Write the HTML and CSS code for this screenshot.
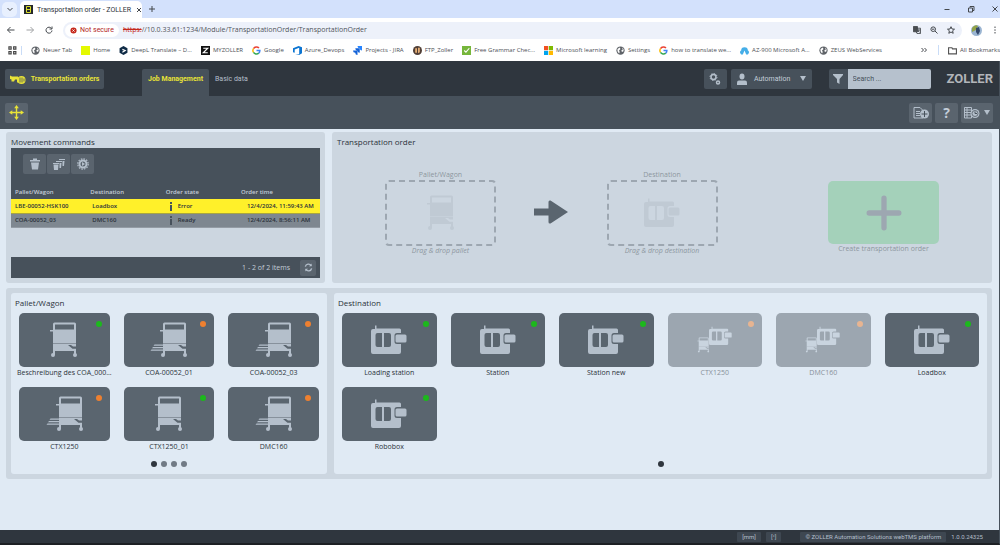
FILE: index.html
```
<!DOCTYPE html>
<html lang="en">

<head>
    <meta charset="UTF-8">
    <meta name="viewport" content="width=device-width, initial-scale=1.0">
    <title>Transportation order - ZOLLER</title>
    <link rel="stylesheet" href="styles.css">
</head>

<body>
    <!-- shared icons -->
    <svg class="sprite" aria-hidden="true">
        <symbol id="wagon" viewBox="0 0 30 36">
            <path fill-rule="evenodd" d="M4 2q0-1.500 1.500-1.500h20q1.500 0 1.500 1.500v31h-2v-4h-19v4h-2zM6 2.500v5h19v-5z" />
            <path class="cut" d="M4 21.500h23v.6h-23zM19 23h3l2 1.500h3v2.200h-3.500z" />
            <path d="M1 8h4v1.500h-4z" />
            <circle cx="4" cy="33" r="2" />
            <circle cx="26" cy="33" r="2" />
        </symbol>
        <symbol id="wagon-fork" viewBox="0 0 37 36">
            <path fill-rule="evenodd" d="M13 2q0-1.500 1.500-1.500h20q1.500 0 1.500 1.500v31h-2v-4h-19v4h-2zM15 2.500v5h19v-5z" />
            <path class="cut" d="M13 21.500h23v.6h-23zM28 23h3l2 1.500h3v2.200h-3.500z" />
            <path d="M10 8h4v1.500h-4zM4.500 22.500h8.500v1.200h-9.500zM3 25h10v1.200h-11zM1.500 27.500h11.500v1.200h-12.500z" />
            <circle cx="13" cy="33" r="2" />
            <circle cx="35" cy="33" r="2" />
        </symbol>
        <symbol id="machine" viewBox="0 0 36 30">
            <path fill-rule="evenodd" d="M4 4v-3.500h1.500v3h23q1.500 0 1.500 1.500v3h-4q-2.500 0-2.500 2.500v6q0 2.500 2.500 2.500h4v8q0 2-2 2h-26q-2 0-2-2v-21q0-2 2-2zM6.500 8q-2 0-2 2v10q0 2 2 2h4.500v-14zM13 8v14h5q2 0 2-2v-10q0-2-2-2z" />
            <rect x="24.500" y="9.500" width="11" height="8" rx="1.500" />
        </symbol>
        <symbol id="machine-wagon" viewBox="0 0 36 30">
            <use href="#machine" x="12" y="1" width="23" height="20" />
            <use href="#wagon" x="0" y="12" width="13" height="16" />
        </symbol>
        <symbol id="globe" viewBox="0 0 12 12">
            <circle cx="6" cy="6" r="5.500" fill="#5f6368" />
            <path d="M2 4l3-2 1 2-2 2 1 2-1 2-2-3zM8 2l2 2v3l-2 1-1-2 2-1z" fill="#fff" />
        </symbol>
        <symbol id="google" viewBox="0 0 12 12" fill="none" stroke-width="2">
            <path d="M2 3.500A4.500 4.500 0 0 1 9.300 2.800" stroke="#ea4335" />
            <path d="M2 3.500a4.500 4.500 0 0 0 0 5" stroke="#fbbc05" />
            <path d="M2 8.500a4.500 4.500 0 0 0 7 1" stroke="#34a853" />
            <path d="M9 9.500a4.500 4.500 0 0 0 1.500-3.500h-4.500" stroke="#4285f4" />
        </symbol>
    </svg>

    <!-- browser window -->
    <header class="browser">
        <div class="tabstrip">
            <button class="tab-search" aria-label="Search tabs"><svg viewBox="0 0 8 8"><path d="M1.500 3l2.500 2.500L6.500 3" /></svg></button>
            <div class="tab">
                <svg class="favicon" viewBox="0 0 9 9"><path fill="#24282c" d="M0 0h9v9H0z" /><path d="M2.500 1.500h4v6h-4zM2 4.500h5" fill="none" stroke="#d9dd2c" /></svg>
                <span class="tab-title">Transportation order - ZOLLER</span>
                <button class="plain" aria-label="Close tab"><svg viewBox="0 0 8 8"><path d="M2 2l4 4M6 2L2 6" /></svg></button>
            </div>
            <button class="plain new-tab" aria-label="New tab"><svg viewBox="0 0 8 8"><path d="M4 1v6M1 4h6" /></svg></button>
            <div class="window-buttons">
                <button class="plain" aria-label="Minimize"><svg viewBox="0 0 8 8"><path d="M1.500 4.500h5" /></svg></button>
                <button class="plain" aria-label="Restore"><svg viewBox="0 0 8 8"><path d="M1.500 3h4v4h-4zM3 2.500v-1h4v4h-1" /></svg></button>
                <button class="plain" aria-label="Close"><svg viewBox="0 0 8 8"><path d="M1.500 1.500l5 5M6.500 1.500l-5 5" /></svg></button>
            </div>
        </div>
        <div class="addressbar">
            <button class="plain" aria-label="Back"><svg viewBox="0 0 8 8"><path d="M7.500 4h-7M3.500 1L.5 4l3 3" /></svg></button>
            <button class="plain faded" aria-label="Forward"><svg viewBox="0 0 8 8"><path d="M.5 4h7M4.500 1l3 3-3 3" /></svg></button>
            <button class="plain" aria-label="Reload"><svg viewBox="0 0 8 8"><path d="M6.500 2.500A3 3 0 1 0 7 4.500M7 .5v2.500H4.500" /></svg></button>
            <div class="address">
                <span class="insecure"><svg viewBox="0 0 8 8"><circle cx="4" cy="4" r="3.500" fill="#c5281c" /><path d="M2.800 2.800l2.400 2.400M5.200 2.800L2.800 5.200" stroke="#fff" /></svg>Not secure</span>
                <span class="url"><s>https:</s>//10.0.33.61:1234/Module/TransportationOrder/TransportationOrder</span>
                <button class="plain" aria-label="Translate"><svg viewBox="0 0 9 9"><path d="M.5.5h4.500v6h-4.500z" fill="#4a4d51" /><path d="M3.500 2.500h5v6h-4l-1-2M5 4.500h3M6.500 4v1l-1.500 2M5.500 5.500l2 1.500" /></svg></button>
                <button class="plain" aria-label="Zoom"><svg viewBox="0 0 8 8"><circle cx="3.200" cy="3.200" r="2.300" /><path d="M5 5l2.500 2.500M2 3.200h2.400" /></svg></button>
                <button class="plain" aria-label="Bookmark this page"><svg viewBox="0 0 8 8"><path d="M4 .7l1 2.300 2.500.2-1.900 1.600.6 2.500L4 6 1.800 7.300l.6-2.500L.5 3.200 3 3z" /></svg></button>
            </div>
            <button class="plain avatar" aria-label="Profile"><svg viewBox="0 0 11 11"><circle cx="5.500" cy="5.500" r="5.500" fill="#9bb5d2" stroke="none" /><path d="M1 3q3-4 6-2l-2 4-4 2z" fill="#93a348" stroke="none" /><path d="M5 3l3-1 1 4-2 4-2-3z" fill="#34486a" stroke="none" /></svg></button>
            <button class="plain" aria-label="Menu"><svg viewBox="0 0 8 8"><path d="M4 .5v1.500M4 3.300v1.500M4 6v1.500" /></svg></button>
        </div>
        <nav class="bookmarks">
            <a href="#" aria-label="Apps" class="apps"><svg viewBox="0 0 8 8"><path d="M.8.8h2v2h-2zM5 .8h2v2H5zM.8 5h2v2h-2zM5 5h2v2H5z" fill="none" stroke="#444" /></svg></a>
            <a href="#"><svg><use href="#globe" /></svg>Neuer Tab</a>
            <a href="#"><svg viewBox="0 0 8 8"><path d="M0 0h8v8H0z" fill="#e4f900" /></svg>Home</a>
            <a href="#"><svg viewBox="0 0 8 8"><path d="M4 0l3.500 2v4L4 8 .5 6V2z" fill="#0f2b46" /><path d="M3 3l2.500 1L3 5.500" stroke="#fff" fill="none" /></svg>DeepL Translate – D...</a>
            <a href="#"><svg viewBox="0 0 8 8"><path d="M0 0h8v8H0z" fill="#111" /><path d="M2 2h4L2 6h4" stroke="#fff" fill="none" /></svg>MYZOLLER</a>
            <a href="#"><svg><use href="#google" /></svg>Google</a>
            <a href="#"><svg viewBox="0 0 8 8"><path d="M0 2l5-2 3 1v5.500L5.500 8 2 7l3.500.3V1.500L1.500 3v3L0 5.500z" fill="#0b74d1" /></svg>Azure_Devops</a>
            <a href="#"><svg viewBox="0 0 8 8"><path d="M4 0h4v4q-2 0-2-2-2 0-2-2z" fill="#2684ff" /><path d="M2 2h4v4q-2 0-2-2-2 0-2-2zM0 4h4v4q-2 0-2-2-2 0-2-2z" fill="#1362d8" /></svg>Projects - JIRA</a>
            <a href="#"><svg viewBox="0 0 8 8"><circle cx="4" cy="4" r="4" fill="#513f36" /><path d="M2 2h1.500v4H2zM4.500 1.500H6v4l-1.500 1z" fill="#f0b67a" /></svg>FTP_Zoller</a>
            <a href="#"><svg viewBox="0 0 8 8"><path d="M0 0h8v8H0z" fill="#76b63b" /><path d="M2 4l1.500 1.500L6.500 2" stroke="#fff" fill="none" /></svg>Free Grammar Chec...</a>
            <a href="#"><svg viewBox="0 0 8 8"><path d="M0 0h3.700v3.700H0z" fill="#f25022" /><path d="M4.300 0H8v3.700H4.300z" fill="#7fba00" /><path d="M0 4.300h3.700V8H0z" fill="#00a4ef" /><path d="M4.300 4.300H8V8H4.300z" fill="#ffb900" /></svg>Microsoft learning</a>
            <a href="#"><svg><use href="#globe" /></svg>Settings</a>
            <a href="#"><svg><use href="#google" /></svg>how to translate we...</a>
            <a href="#"><svg viewBox="0 0 8 8"><path d="M0 6q0-2 1-2 0-3 3-3t3 3q1 0 1 2L7 7.500H5.500L4 4 2.500 7.500H1z" fill="#45aee8" /></svg>AZ-900 Microsoft A...</a>
            <a href="#"><svg><use href="#globe" /></svg>ZEUS WebServices</a>
            <button class="plain more" aria-label="More bookmarks"><svg viewBox="0 0 8 8"><path d="M1.500 2l2 2-2 2M4.500 2l2 2-2 2" /></svg></button>
            <a href="#" class="all"><svg viewBox="0 0 8 8"><path d="M.5 1.500h3l.5 1h3.500v4.500h-7z" fill="none" stroke="#555" /></svg>All Bookmarks</a>
        </nav>
    </header>

    <div class="app">
        <div class="topbar">
            <button class="btn module">
                <svg viewBox="0 0 16 11"><path d="M0 2l2 1h6v3H5l-1 2H1.500V6L0 5.500zM7 4h4v5H7z" /><circle cx="11.500" cy="6.500" r="4" /><path d="M10 4v5M12 4v5M14 5v3" stroke="#47515b" stroke-width=".8" fill="none" /></svg>
                Transportation orders
            </button>
            <nav class="modules">
                <a href="#" class="active">Job Management</a>
                <a href="#">Basic data</a>
            </nav>
            <button class="btn gear" aria-label="Settings"><svg viewBox="0 0 12 12" fill="none" stroke="#b4bfcb"><circle cx="4.500" cy="4" r="2.500" stroke-width="1.500" /><circle cx="4.500" cy="4" r="3.500" stroke-dasharray="1.500 1.200" /><circle cx="9" cy="9.500" r="1.500" stroke-width="1.500" /></svg></button>
            <button class="btn user">
                <svg viewBox="0 0 12 12"><ellipse cx="6" cy="3.500" rx="2.500" ry="3" /><path d="M1 12V9.500Q1 7.500 3 7.500h6q2 0 2 2V12z" /></svg>
                Automation
                <span class="caret"></span>
            </button>
            <form class="search">
                <button type="button" class="btn" aria-label="Filter"><svg viewBox="0 0 12 12"><path d="M1 1h10v1L7.500 6v5L5 9.500V6L1 2z" /></svg></button>
                <input type="search" placeholder="Search ..." aria-label="Search">
            </form>
            <span class="logo">ZOLLER</span>
        </div>

        <div class="toolbar">
            <button class="btn" aria-label="Move"><svg class="move" viewBox="0 0 16 16"><path d="M8 2v12M2 8h12" stroke="#e8e337" stroke-width="1.500" /><path d="M8 0l2.500 3.500h-5zM8 16l2.500-3.500h-5zM0 8l3.500-2.500v5zM16 8l-3.500-2.500v5z" /></svg></button>
            <button class="btn push" aria-label="New order"><svg class="wide" viewBox="0 0 16 12"><path d="M1 .5h6l3 3V11H1zM3 4.500h4M3 6.500h4M3 8.500h4" fill="none" stroke="#b4bfcb" /><circle cx="11.500" cy="7" r="4.500" /><path d="M11.500 4v6M8.500 7h6" stroke="#47515b" /></svg></button>
            <button class="btn help" aria-label="Help">?</button>
            <button class="btn history" aria-label="History"><svg class="wide" viewBox="0 0 16 12"><path d="M.5.500h7V11h-7zM.5 3h7M.5 5.500h7M.5 8h7M3 .5V11" fill="none" stroke="#b4bfcb" /><circle cx="11" cy="6.500" r="4.500" /><circle cx="11" cy="6.500" r="3" fill="none" stroke="#47515b" stroke-width=".7" /><path d="M11 4.500v2h2" fill="none" stroke="#47515b" /></svg><span class="caret"></span></button>
        </div>

        <main>
            <div class="row upper">
                <section class="panel commands">
                    <h2>Movement commands</h2>
                    <div class="grid">
                        <div class="grid-tools">
                            <button class="btn" aria-label="Delete"><svg viewBox="0 0 12 12"><path d="M1 2h3V.500h4V2h3v1.500H1zM2 4.500h8L9 11.500H3z" /></svg></button>
                            <button class="btn" aria-label="Delete all"><svg viewBox="0 0 12 12"><path d="M0 5h6v1H0zM.5 6.500h5l-.5 5.500H1zM3 3h6v1H3zM6.500 5H8.500l-.5 5H6.500zM6 1h6v1H6zM9.500 3H11.500L11 8H9.500z" /></svg></button>
                            <button class="btn" aria-label="Process"><svg viewBox="0 0 12 12" fill="none" stroke="#b4bfcb"><circle cx="6" cy="6" r="3.500" stroke-width="2" /><circle cx="6" cy="6" r="5.200" stroke-dasharray="1.600 1.100" stroke-width="1.200" /><path d="M5 4l3 2-3 2z" fill="#b4bfcb" stroke="none" /></svg></button>
                        </div>
                        <table>
                            <thead>
                                <tr><th>Pallet/Wagon</th><th>Destination</th><th>Order state</th><th>Order time</th></tr>
                            </thead>
                            <tbody>
                                <tr class="selected"><td>LBE-00052-HSK100</td><td>Loadbox</td><td><i class="info"></i>Error</td><td>12/4/2024, 11:59:43 AM</td></tr>
                                <tr><td>COA-00052_03</td><td>DMC160</td><td><i class="info"></i>Ready</td><td>12/4/2024, 8:56:11 AM</td></tr>
                            </tbody>
                        </table>
                        <div class="pager">
                            <span>1 - 2 of 2 items</span>
                            <button class="btn" aria-label="Refresh"><svg viewBox="0 0 10 10" fill="none" stroke="#b4bfcb" stroke-width="1.500"><path d="M1.500 4A3.500 3.500 0 0 1 8 3M8.500 6A3.500 3.500 0 0 1 2 7" /><path d="M8.500.5v3h-3zM1.500 9.500v-3h3z" fill="#b4bfcb" stroke="none" /></svg></button>
                        </div>
                    </div>
                </section>

                <section class="panel order">
                    <h2>Transportation order</h2>
                    <div class="steps">
                        <figure class="drop">
                            <figcaption>Pallet/Wagon</figcaption>
                            <div class="target"><svg class="icon-wagon"><use href="#wagon" /></svg></div>
                            <em>Drag &amp; drop pallet</em>
                        </figure>
                        <div class="arrow"><svg viewBox="0 0 34 24"><path d="M0 8.500h14.500V2q0-2 2-1.500L34 12 16.500 23.500q-2 .5-2-1.500v-6.500H0z" /></svg></div>
                        <figure class="drop">
                            <figcaption>Destination</figcaption>
                            <div class="target"><svg class="icon-machine"><use href="#machine" /></svg></div>
                            <em>Drag &amp; drop destination</em>
                        </figure>
                        <div class="spacer"></div>
                        <div class="create">
                            <button id="create" disabled><svg viewBox="0 0 34 34"><path d="M17 3v28M3 17h28" /></svg></button>
                            <label for="create">Create transportation order</label>
                        </div>
                    </div>
                </section>
            </div>

            <div class="row lower">
                <section class="pool">
                    <h2>Pallet/Wagon</h2>
                    <div class="tiles wagons">
                        <button class="tile"><span class="face green"><svg class="icon-wagon"><use href="#wagon" /></svg></span><span class="name">Beschreibung des COA_000...</span></button>
                        <button class="tile"><span class="face orange"><svg class="icon-fork"><use href="#wagon-fork" /></svg></span><span class="name">COA-00052_01</span></button>
                        <button class="tile"><span class="face orange"><svg class="icon-fork"><use href="#wagon-fork" /></svg></span><span class="name">COA-00052_03</span></button>
                        <button class="tile"><span class="face orange"><svg class="icon-fork"><use href="#wagon-fork" /></svg></span><span class="name">CTX1250</span></button>
                        <button class="tile"><span class="face green"><svg class="icon-wagon"><use href="#wagon" /></svg></span><span class="name">CTX1250_01</span></button>
                        <button class="tile"><span class="face orange"><svg class="icon-fork"><use href="#wagon-fork" /></svg></span><span class="name">DMC160</span></button>
                    </div>
                    <div class="dots">
                        <button class="current" aria-label="Page 1"></button>
                        <button aria-label="Page 2"></button>
                        <button aria-label="Page 3"></button>
                        <button aria-label="Page 4"></button>
                    </div>
                </section>

                <section class="pool">
                    <h2>Destination</h2>
                    <div class="tiles stations">
                        <button class="tile"><span class="face green"><svg class="icon-machine"><use href="#machine" /></svg></span><span class="name">Loading station</span></button>
                        <button class="tile"><span class="face green"><svg class="icon-machine"><use href="#machine" /></svg></span><span class="name">Station</span></button>
                        <button class="tile"><span class="face green"><svg class="icon-machine"><use href="#machine" /></svg></span><span class="name">Station new</span></button>
                        <button class="tile" disabled><span class="face orange"><svg class="icon-machine"><use href="#machine-wagon" /></svg></span><span class="name">CTX1250</span></button>
                        <button class="tile" disabled><span class="face orange"><svg class="icon-machine"><use href="#machine-wagon" /></svg></span><span class="name">DMC160</span></button>
                        <button class="tile"><span class="face green"><svg class="icon-machine"><use href="#machine" /></svg></span><span class="name">Loadbox</span></button>
                        <button class="tile"><span class="face green"><svg class="icon-machine"><use href="#machine" /></svg></span><span class="name">Robobox</span></button>
                    </div>
                    <div class="dots">
                        <button class="current" aria-label="Page 1"></button>
                    </div>
                </section>
            </div>
        </main>

        <footer>
            <span class="chip">[mm]</span>
            <span class="chip angle">[°]</span>
            <span class="chip">© ZOLLER Automation Solutions webTMS platform</span>
            <span class="version">1.0.0.24325</span>
        </footer>
    </div>
</body>

</html>
```
FILE: styles.css
```
* {
    box-sizing: border-box;
    margin: 0;
    padding: 0;
}

body {
    display: flex;
    flex-direction: column;
    min-height: 100vh;
    overflow: hidden;
    font-family: "Open Sans", "Noto Sans", sans-serif;
    font-size: 7px;
    line-height: 10px;
    color: #2b323a;
    background-color: #e0eaf4;
}

button,
input {
    font: inherit;
    color: inherit;
    border: none;
    background: none;
}

a {
    color: inherit;
    text-decoration: none;
}

svg {
    display: block;
    flex: none;
}

.sprite {
    position: absolute;
    width: 0;
    height: 0;
}

/* browser window */
.browser {
    background-color: #fff;
    height: 61px;
    white-space: nowrap;
}

.plain {
    display: flex;
    align-items: center;
    justify-content: center;
    width: 10px;
    height: 10px;
}

.plain svg,
.tab-search svg {
    width: 8px;
    height: 8px;
    fill: none;
    stroke: #44484d;
}

.faded {
    opacity: .5;
}

.tabstrip {
    display: flex;
    align-items: center;
    height: 18px;
    background-color: #d3e1fc;
}

.tab-search {
    display: flex;
    align-items: center;
    justify-content: center;
    width: 15px;
    height: 15px;
    margin: 0 3px 0 2px;
    border-radius: 5px;
    background-color: #e8f0fe;
}

.tab {
    display: flex;
    align-items: center;
    align-self: flex-end;
    gap: 4px;
    width: 122px;
    height: 17px;
    padding: 0 4px;
    border-radius: 5px 5px 0 0;
    font-family: Roboto, sans-serif;
    background-color: #fff;
}

.favicon {
    width: 9px;
    height: 9px;
}

.tab-title {
    flex: 1;
}

.new-tab {
    margin-left: 5px;
}

.window-buttons {
    display: flex;
    gap: 14px;
    margin-left: auto;
}

.addressbar {
    display: flex;
    align-items: center;
    gap: 9px;
    height: 24px;
    padding: 0 0 0 6px;
}

.address {
    display: flex;
    flex: 1;
    align-items: center;
    gap: 7px;
    height: 17px;
    padding: 0 6px 0 2px;
    border-radius: 9px;
    background-color: #edf1fa;
}

.insecure {
    display: flex;
    align-items: center;
    gap: 3px;
    height: 13px;
    padding: 0 5px;
    margin-right: -3px;
    border-radius: 7px;
    font-family: Roboto, sans-serif;
    color: #b3261e;
    background-color: #fff;
}

.insecure svg {
    width: 7px;
    height: 7px;
}

.url {
    flex: 1;
    color: #50545a;
}

.url s {
    color: #c5281c;
}

.avatar svg {
    width: 11px;
    height: 11px;
}

.bookmarks {
    display: flex;
    align-items: center;
    gap: 9px;
    height: 16px;
    padding-left: 8px;
    font-size: 6px;
    color: #4c5055;
}

.bookmarks a {
    display: flex;
    align-items: center;
    gap: 3px;
}

.bookmarks a svg {
    width: 9px;
    height: 9px;
}

.bookmarks .apps {
    padding-right: 4px;
    border-right: 1px solid #c9dcf7;
}

.bookmarks .more {
    margin-left: auto;
}

.bookmarks .all {
    padding-left: 9px;
    border-left: 1px solid #c9dcf7;
}

/* application */
.app {
    display: flex;
    flex: 1;
    flex-direction: column;
    border-right: 1px solid #47515b;
    border-bottom: 2px solid #1d2024;
}

.btn {
    display: flex;
    align-items: center;
    justify-content: center;
    width: 23px;
    height: 20px;
    border-radius: 2px;
    color: #c3cdd8;
    fill: #b4bfcb;
    background-color: #5a646e;
}

.btn svg {
    width: 12px;
    height: 12px;
}

.btn svg.wide {
    width: 16px;
}

.btn svg.move {
    width: 15px;
    height: 15px;
    fill: #e8e337;
}

.caret {
    border: 3px solid transparent;
    border-top: 5px solid #b4bfcb;
    border-bottom: none;
}

.topbar {
    display: flex;
    align-items: center;
    height: 35px;
    padding: 0 6px 0 5px;
    font-family: Roboto, sans-serif;
    background-color: #2f363e;
}

.topbar .btn {
    background-color: #47515b;
}

.topbar .module {
    gap: 5px;
    width: 99px;
    font-weight: 700;
    color: #e8e337;
    fill: #e8e337;
}

.topbar .module svg {
    width: 16px;
}

.modules {
    display: flex;
    align-self: flex-end;
    margin: 0 auto 0 38px;
    line-height: 20px;
    color: #b4bfcb;
}

.modules a {
    height: 27px;
    padding: 0 6px;
}

.modules .active {
    font-weight: 700;
    color: #e8e337;
    border-radius: 2px 2px 0 0;
    background-color: #47515b;
}

.topbar .user {
    gap: 6px;
    width: 81px;
    margin: 0 17px 0 4px;
}

.user .caret {
    margin-left: 4px;
}

.search {
    display: flex;
    width: 102px;
    margin-right: 16px;
}

.search .btn {
    width: 19px;
    border-radius: 2px 0 0 2px;
}

.search input {
    flex: 1;
    min-width: 0;
    padding: 0 5px;
    border-radius: 0 2px 2px 0;
    background-color: #b6c1cd;
}

.search input::placeholder {
    color: #47515b;
}

.logo {
    font-size: 13px;
    font-weight: 700;
    line-height: 20px;
    color: #b2b5b9;
}

.toolbar {
    display: flex;
    align-items: center;
    gap: 3px;
    height: 33px;
    padding: 0 6px 0 5px;
    background-color: #47515b;
}

.toolbar .push {
    margin-left: auto;
}

.toolbar .help {
    font-size: 14px;
    font-weight: 700;
    line-height: 20px;
}

.toolbar .history {
    gap: 4px;
    width: 32px;
}

main {
    flex: 1;
    padding: 3px 7px 0 6px;
}

h2 {
    font-size: 8px;
    font-weight: 500;
    line-height: 12px;
}

.row {
    display: grid;
    gap: 7px;
}

.upper {
    grid-template-columns: 319fr 660fr;
    margin-bottom: 5px;
}

.panel {
    min-height: 151px;
    padding: 4px 5px 5px;
    border-radius: 3px;
    background-color: #ccd6e0;
}

.grid {
    display: flex;
    flex-direction: column;
    height: 130px;
}

.grid-tools {
    display: flex;
    gap: 1px;
    height: 36px;
    padding: 6px 12px;
    background-color: #47515b;
}

table {
    width: 100%;
    table-layout: fixed;
    border-collapse: collapse;
    font-size: 6px;
    font-weight: 600;
    white-space: nowrap;
}

th {
    height: 15px;
    padding-left: 4px;
    font-weight: 600;
    text-align: left;
    color: #c3cdd8;
    background-color: #47515b;
}

th:last-child {
    width: 83px;
}

td {
    height: 14px;
    padding-left: 6px;
    border-bottom: 1px solid #949ca5;
    background-color: #7e8790;
}

td:first-child {
    padding-left: 4px;
}

td:last-child {
    padding-left: 10px;
}

.selected td {
    border-color: #a9a540;
    background-color: #fff02a;
}

.info {
    display: inline-block;
    width: 2px;
    height: 9px;
    margin: 0 6px 0 2px;
    vertical-align: middle;
    background: linear-gradient(#47515b 2px, transparent 2px 3px, #47515b 3px);
}

.pager {
    display: flex;
    align-items: center;
    justify-content: flex-end;
    gap: 10px;
    height: 21px;
    margin-top: auto;
    padding-right: 4px;
    color: #c3cdd8;
    background-color: #47515b;
}

.pager .btn {
    width: 16px;
    height: 16px;
}

.pager .btn svg {
    width: 9px;
    height: 9px;
}

.steps {
    display: flex;
    align-items: flex-start;
    padding: 22px 48px 0;
}

.drop,
.create {
    width: 111px;
    text-align: center;
    white-space: nowrap;
    color: #8c969f;
}

.drop em {
    display: block;
}

.target {
    display: flex;
    align-items: center;
    justify-content: center;
    height: 66px;
    border: 2px dashed #9da7b1;
    border-radius: 4px;
    fill: #c0cad4;
    --cut: #ccd6e0;
}

.arrow,
.spacer {
    flex: 1;
}

.arrow svg {
    width: 34px;
    height: 24px;
    margin: 30px auto 0;
    fill: #5a656f;
}

.create {
    padding-top: 11px;
}

.create button {
    display: flex;
    align-items: center;
    justify-content: center;
    width: 100%;
    height: 63px;
    border-radius: 5px;
    background-color: #a4d1ba;
}

.create svg {
    width: 36px;
    height: 36px;
    fill: none;
    stroke: #9da7b1;
    stroke-width: 5px;
    stroke-linecap: round;
}

.lower {
    grid-template-columns: 316fr 653fr;
    padding: 5px;
    border-radius: 3px;
    background-color: #ccd6e0;
}

.pool {
    min-width: 0;
    padding: 4px 8px 7px;
    border-radius: 3px;
    background-color: #e0eaf4;
}

.pool h2 {
    margin: 0 -4px 4px;
}

.tiles {
    display: grid;
    gap: 9px 14px;
}

.wagons {
    grid-template-columns: repeat(3, minmax(0, 1fr));
}

.stations {
    grid-template-columns: repeat(6, minmax(0, 1fr));
}

.tile:disabled {
    opacity: .5;
}

.face {
    position: relative;
    display: flex;
    align-items: center;
    justify-content: center;
    height: 54px;
    border-radius: 5px;
    fill: #b4bfcb;
    background-color: #5a656f;
    --cut: #5a656f;
}

/* status lamp in the corner */
.face::after {
    content: "";
    position: absolute;
    top: 8px;
    right: 8px;
    width: 6px;
    height: 6px;
    border-radius: 50%;
}

.green::after {
    background-color: #1cb81c;
}

.orange::after {
    background-color: #ee8030;
}

.cut {
    fill: var(--cut);
}

.icon-wagon {
    width: 30px;
    height: 36px;
}

.icon-fork {
    width: 37px;
    height: 36px;
}

.icon-machine {
    width: 36px;
    height: 30px;
}

.name {
    display: flex;
    justify-content: center;
    line-height: 11px;
    white-space: nowrap;
}

.dots {
    display: flex;
    justify-content: center;
    gap: 4px;
    margin-top: 9px;
}

.dots button {
    width: 6px;
    height: 6px;
    border-radius: 50%;
    background-color: #717b85;
}

.dots .current {
    background-color: #2f363e;
}

footer {
    display: flex;
    align-items: center;
    justify-content: flex-end;
    gap: 5px;
    height: 13px;
    padding-right: 16px;
    font-family: Roboto, sans-serif;
    font-size: 6px;
    color: #b4bfcb;
    background-color: #2f363e;
}

.chip {
    padding: 0 5px;
    border-radius: 1px;
    background-color: #3e4751;
}

.angle {
    margin-right: 14px;
}
```
